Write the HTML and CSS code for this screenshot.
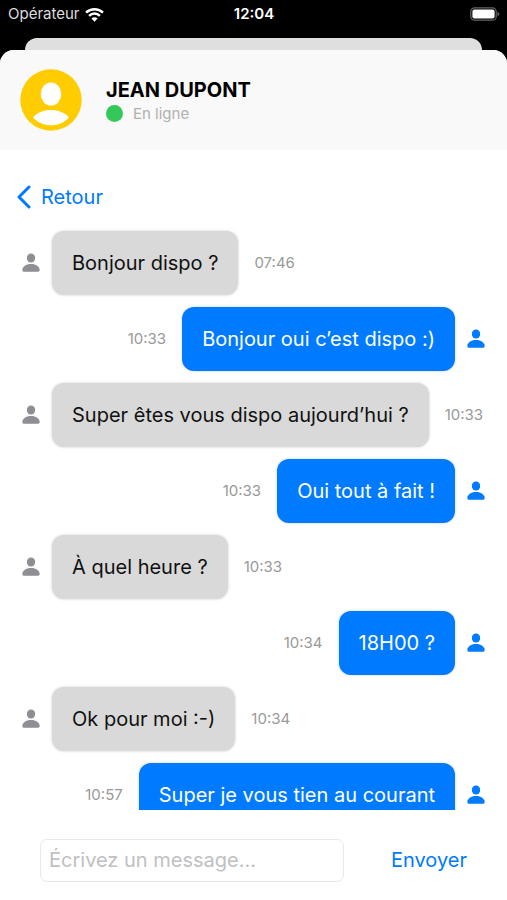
FILE: index.html
```html
<!DOCTYPE html>
<html lang="fr">
<head>
<meta charset="utf-8">
<meta name="viewport" content="width=device-width, initial-scale=1">
<title>Jean Dupont</title>
<link rel="stylesheet" href="styles.css">
</head>
<body>
<svg class="defs" aria-hidden="true">
  <symbol id="person" viewBox="0 0 18 20">
    <ellipse cx="9" cy="5" rx="4.200" ry="4.500"/>
    <path d="M.3 17C.3 13.600 4 10.900 9 10.900s8.700 2.700 8.700 6.100c0 1.200-.7 1.800-1.900 1.800H2.200C1 18.800.3 18.200.3 17z"/>
  </symbol>
</svg>
<div class="phone">
  <div class="status">
    <div class="carrier">
      <span>Opérateur</span>
      <svg class="wifi" viewBox="0 0 18 14" aria-hidden="true">
        <path d="M1 5.200a11.500 11.500 0 0 1 16 0M3.900 8.200a7.300 7.300 0 0 1 10.200 0" fill="none" stroke="#fff" stroke-width="2.300"/>
        <path d="M9 13.800 6.100 10.900a4.200 4.200 0 0 1 5.800 0z" fill="#fff"/>
      </svg>
    </div>
    <span class="clock">12:04</span>
    <svg class="battery" viewBox="0 0 30 14" aria-hidden="true">
      <rect x=".8" y=".8" width="25.400" height="12.400" rx="3.800" fill="none" stroke="#666" stroke-width="1.200"/>
      <rect x="2.400" y="2.400" width="22.200" height="9.200" rx="2" fill="#fff"/>
      <path d="M27.500 4.800c2.400.8 2.400 3.600 0 4.400z" fill="#666"/>
    </svg>
  </div>
  <div class="back-sheet"></div>
  <main class="sheet">
    <header class="contact">
      <svg class="avatar" viewBox="0 0 62 62" aria-hidden="true">
        <circle cx="31" cy="31" r="30.700" fill="#ffcc00"/>
        <ellipse cx="31" cy="25" rx="10.300" ry="11.500" fill="#fff"/>
        <path d="M13 48.500C17 43.500 23.500 41 31 41s14 2.500 18 7.500C44.500 53.500 38 56.300 31 56.300S17.500 53.500 13 48.500z" fill="#fff"/>
      </svg>
      <div>
        <h1 class="name">JEAN DUPONT</h1>
        <p class="presence"><span class="dot"></span>En ligne</p>
      </div>
    </header>
    <a class="back" href="#">
      <svg class="chevron" viewBox="0 0 16 24" aria-hidden="true"><path d="M13 2 3 12l10 10" fill="none" stroke="currentColor" stroke-width="3" stroke-linecap="round" stroke-linejoin="round"/></svg>
      <span>Retour</span>
    </a>
    <div class="messages">
      <div class="message"><svg class="person" aria-hidden="true"><use href="#person"/></svg><p class="bubble">Bonjour dispo ?</p><time>07:46</time></div>
      <div class="message sent"><svg class="person" aria-hidden="true"><use href="#person"/></svg><p class="bubble">Bonjour oui c’est dispo :)</p><time>10:33</time></div>
      <div class="message"><svg class="person" aria-hidden="true"><use href="#person"/></svg><p class="bubble">Super êtes vous dispo aujourd’hui ?</p><time>10:33</time></div>
      <div class="message sent"><svg class="person" aria-hidden="true"><use href="#person"/></svg><p class="bubble">Oui tout à fait !</p><time>10:33</time></div>
      <div class="message"><svg class="person" aria-hidden="true"><use href="#person"/></svg><p class="bubble">À quel heure ?</p><time>10:33</time></div>
      <div class="message sent"><svg class="person" aria-hidden="true"><use href="#person"/></svg><p class="bubble">18H00 ?</p><time>10:34</time></div>
      <div class="message"><svg class="person" aria-hidden="true"><use href="#person"/></svg><p class="bubble">Ok pour moi :-)</p><time>10:34</time></div>
      <div class="message sent"><svg class="person" aria-hidden="true"><use href="#person"/></svg><p class="bubble">Super je vous tien au courant</p><time>10:57</time></div>
    </div>
    <form class="composer">
      <input class="field" type="text" placeholder="Écrivez un message..." aria-label="Message">
      <button class="send" type="button">Envoyer</button>
    </form>
  </main>
</div>
</body>
</html>
```
FILE: styles.css
```css
* {
  box-sizing: border-box;
}

body {
  margin: 0;
  background: #000;
  font-family: Inter, "Liberation Sans", sans-serif;
  font-size: 20px;
  line-height: 24px;
}

h1,
p {
  margin: 0;
}

.defs {
  position: absolute;
  width: 0;
  height: 0;
}

.phone {
  display: flex;
  flex-direction: column;
  height: 100vh;
}

.status {
  display: grid;
  grid-template-columns: 1fr auto 1fr;
  align-items: center;
  flex: none;
  height: 38px;
  padding: 0 7px 10px 8px;
  color: #fff;
}

.carrier {
  display: flex;
  align-items: center;
  gap: 5px;
  color: #ddd;
  font-size: 15px;
}

.wifi {
  width: 19px;
  height: 15px;
}

.clock {
  font-size: 15px;
  font-weight: 600;
}

.battery {
  justify-self: end;
  width: 30px;
  height: 14px;
}

.back-sheet {
  flex: none;
  height: 12px;
  margin: 0 25px;
  border-radius: 12px 12px 0 0;
  background: #dfdfdf;
}

.sheet {
  display: flex;
  flex: 1;
  flex-direction: column;
  min-height: 0;
  overflow: hidden;
  border-radius: 14px 14px 0 0;
  background: #fff;
}

.contact {
  display: flex;
  align-items: center;
  gap: 24px;
  flex: none;
  height: 100px;
  padding: 0 20px;
  background: #f9f9f9;
}

.avatar {
  width: 62px;
  height: 62px;
}

.name {
  padding-top: 3px;
  font-size: 20px;
  font-weight: 700;
  line-height: 24px;
}

.presence {
  display: flex;
  align-items: center;
  gap: 10px;
  color: #b0b0b0;
  font-size: 15px;
}

.dot {
  width: 17px;
  height: 17px;
  border-radius: 50%;
  background: #34c759;
}

.back {
  display: flex;
  align-items: center;
  align-self: flex-start;
  gap: 9px;
  flex: none;
  margin: 35px 16px 17px;
  color: #007aff;
  text-decoration: none;
}

.chevron {
  width: 16px;
  height: 24px;
}

.messages {
  display: flex;
  flex: 1;
  flex-direction: column;
  gap: 12px;
  min-height: 0;
  padding: 5px 22px 0;
  overflow: hidden;
}

.message {
  display: flex;
  align-items: center;
  flex: none;
  color: #8e8e93;
}

.sent {
  flex-direction: row-reverse;
  color: #007aff;
}

.person {
  flex: none;
  width: 18px;
  height: 20px;
  fill: currentColor;
}

.bubble {
  margin: 0 16px 0 12px;
  padding: 20px;
  border-radius: 12px;
  background: #d9d9d9;
  box-shadow: 0 0 3px rgb(0 0 0 / 20%);
  color: #111;
}

.sent .bubble {
  margin: 0 12px 0 16px;
  background: #007aff;
  color: #fff;
}

time {
  color: #999;
  font-size: 15px;
}

.composer {
  display: flex;
  align-items: center;
  flex: none;
  height: 90px;
  padding: 10px 40px 0;
}

.field {
  flex: 1;
  min-width: 0;
  height: 43px;
  margin-right: 47px;
  padding: 0 8px;
  border: 1px solid #e8e8e8;
  border-radius: 7px;
  background: #fff;
  font: inherit;
}

.field::placeholder {
  color: #c0c0c2;
  opacity: 1;
}

.send {
  padding: 0;
  border: 0;
  background: none;
  color: #007aff;
  font: inherit;
}
```
